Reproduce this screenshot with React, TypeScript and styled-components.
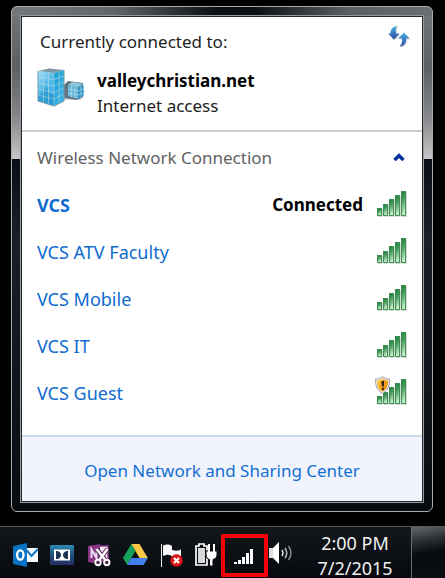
import React from "react";
import styled, { createGlobalStyle } from "styled-components";

const GlobalStyle = createGlobalStyle`
  * { box-sizing: border-box; }
  body {
    margin: 0;
    background: #000;
    font-family: "Noto Sans", "Open Sans", sans-serif;
    font-size: 17px;
    line-height: 24px;
  }
  button { font: inherit; color: inherit; border: 0; background: none; padding: 0; cursor: pointer; }
  svg { display: block; flex: none; }
`;

const Desktop = styled.div`
  min-height: 100vh;
  display: flex;
  flex-direction: column;
  justify-content: space-between;
`;

const Frame = styled.main`
  margin: 6px 12px 0 11px;
  padding: 8px;
  border: 1px solid #a9abad;
  border-radius: 6px;
  background:
    linear-gradient(90deg, #75787b 0%, #64676a 24%, #0c1115 48%, #0c1115 58%, #5c5f62 80%, #6b6e71 100%) top / 100% 9px no-repeat,
    linear-gradient(180deg, #75787b 0, #5c6063 60px, #85878a 110px, #c6c7c8 152px, #090f15 152px, #1a1f26 230px, #070c11 100%);
`;

const Panel = styled.div`
  border: 1px solid #96989b;
  outline: 1px solid #24282c;
  outline-offset: -2px;
  padding: 1px;
  background: #fff;
`;

const Current = styled.header`
  display: grid;
  grid-template-columns: 48px 1fr auto;
  column-gap: 12px;
  padding: 13px 11px 12px 15px;
  border-bottom: 2px solid #cdcdcd;
`;

const Heading = styled.h1`
  grid-column: 1 / 3;
  margin: 0 0 14px 3px;
  font-size: 17px;
  font-weight: 400;
  line-height: 24px;
  color: #222;
`;

const Details = styled.div`
  line-height: 25px;
  color: #1c1c1c;
`;

const NetworkName = styled.strong`
  display: block;
  color: #000;
`;

const RefreshButton = styled.button`
  align-self: start;
  margin-top: -4px;
`;

const Networks = styled.section`
  padding: 4px 13px 19px 15px;
`;

const GroupButton = styled.button`
  width: 100%;
  height: 45px;
  display: flex;
  align-items: center;
  justify-content: space-between;
  padding: 0 4px 2px 0;
  color: #626262;
`;

const List = styled.ul`
  margin: 0;
  padding: 0;
  list-style: none;
`;

const Row = styled.button<{ $active?: boolean }>`
  width: 100%;
  height: 47px;
  display: flex;
  align-items: center;
  gap: 14px;
  text-align: left;
  color: #0f6bd0;
  font-weight: ${(p) => (p.$active ? 700 : 400)};
`;

const Name = styled.span`
  flex: 1;
  font-size: 18px;
`;

const Status = styled.span`
  color: #000;
`;

const Footer = styled.footer`
  display: flex;
  align-items: center;
  justify-content: center;
  height: 66px;
  padding-top: 4px;
  border-top: 2px solid #cfdbea;
  background: #f1f4fc;
`;

const CenterLink = styled.a`
  color: #146fd3;
  text-decoration: none;
`;

const Taskbar = styled.nav`
  display: flex;
  height: 52px;
  padding-left: 13px;
  border-top: 1px solid #54585b;
  background: linear-gradient(180deg, #12171b, #070b0f 90%, #0d0610);
`;

const Tray = styled.div`
  display: flex;
  align-items: center;
  gap: 12px;
  padding-top: 4px;
`;

const TrayButton = styled.button``;

const NetworkButton = styled.button`
  align-self: flex-start;
  display: flex;
  align-items: flex-end;
  justify-content: center;
  width: 47px;
  height: 43px;
  margin: 7px 0 0 3px;
  padding-bottom: 8px;
  border: 4px solid #f40008;
  border-radius: 1px;
`;

const Clock = styled.time`
  flex: 1;
  height: 47px;
  margin-top: 4px;
  padding-left: 6px;
  text-align: center;
  font-size: 18px;
  line-height: 25px;
  color: #f0f0f0;
`;

const ShowDesktop = styled.button`
  width: 34px;
  border-left: 1px solid #6a6d70;
  background: linear-gradient(170deg, #65686a 0, #2d3235 26%, #080c0f 50%, #0a0e12 100%);
`;

const bars = [
  [0, 7],
  [6, 11],
  [12, 16],
  [18, 20],
  [24, 24],
];

const Signal = ({ guarded }: { guarded?: boolean }) => (
  <svg width="32" height="32" viewBox="0 0 32 32" aria-hidden="true" overflow="visible">
    <defs>
      <linearGradient id="bar" x1="0" y1="0" x2="0.3" y2="1">
        <stop offset="0" stopColor="#177b36" />
        <stop offset="0.45" stopColor="#4c9e60" />
        <stop offset="1" stopColor="#c9f0cd" />
      </linearGradient>
      <linearGradient id="shield" x1="0" y1="0" x2="1" y2="1">
        <stop offset="0" stopColor="#ffd65a" />
        <stop offset="0.5" stopColor="#f7a51c" />
        <stop offset="1" stopColor="#dc7c08" />
      </linearGradient>
    </defs>
    {bars.map(([x, h]) => (
      <g key={x}>
        <rect x={x + 1} y={27 - h} width="5" height={h + 1} fill="#d3ddd4" />
        <rect x={x + 0.5} y={26.5 - h} width="4" height={h} fill="url(#bar)" stroke="#34874b" strokeWidth="0.9" />
      </g>
    ))}
    {guarded && (
      <g>
        <path d="M5.500-.5C3.500 1.500 1 2-1.500 2.200C-1.500 8-.5 13 5.500 16.500C11.500 13 12.700 8 12.700 2.200C10 2 7.500 1.500 5.500-.5Z" fill="#e8e8e8" stroke="#8e8e8e" strokeWidth="0.8" />
        <path d="M5.500 1.200C4 2.700 2 3.400 0 3.600C0 8 1 12 5.500 14.800C10 12 11.200 8 11.200 3.600C9 3.400 7 2.700 5.500 1.200Z" fill="url(#shield)" />
        <path d="M4.200 4.500L7.200 3.500L6.800 9.500H5Z M5 10.800H6.900V13H5Z" fill="#302010" />
      </g>
    )}
  </svg>
);

const Buildings = () => (
  <svg width="50" height="40" viewBox="0 0 50 40" aria-hidden="true">
    <defs>
      <linearGradient id="glassFront" x1="0" y1="0" x2="0.5" y2="1">
        <stop offset="0" stopColor="#a5e1f7" />
        <stop offset="0.5" stopColor="#56bdea" />
        <stop offset="1" stopColor="#3babe0" />
      </linearGradient>
      <linearGradient id="glassSide" x1="0" y1="0" x2="1" y2="1">
        <stop offset="0" stopColor="#169bd0" />
        <stop offset="1" stopColor="#45b9ea" />
      </linearGradient>
    </defs>
    <path d="M17 38L29 32L44 32L48 23L46 19L30 25Z" fill="#777" opacity="0.28" />
    <path d="M27 17L31 13L46 15V29L40 32L27 30Z" fill="#62737e" />
    <path d="M31 17L41 19V31L31 28Z" fill="#6ab7dc" />
    <path d="M41 19L46.500 17V28L41 31Z" fill="#2e93c5" />
    <path d="M31 17L35 14L46.500 16L41 19Z" fill="#8cc5dc" />
    <path d="M31 21L41 23L46.500 20.500M31 25L41 27L46.500 24.500M34.500 17.500V29.500M38 18.500V30.500M44 18V29.500" fill="none" stroke="#b7e1ed" strokeWidth="0.6" />
    <path d="M1 3L17 5V38L1 33Z" fill="url(#glassFront)" />
    <path d="M17 5L27 2V33L17 38Z" fill="url(#glassSide)" />
    <path d="M1 3L12 .500L27 2L17 5Z" fill="#7d98a5" />
    <path d="M1 28L5 24L9 19L13 25L17 28V38L1 33Z" fill="#1385bd" opacity="0.45" />
    <path d="M1 9L17 11.500L27 8M1 15L17 18L27 14M1 21L17 24.500L27 20M1 27L17 31L27 26M6.500 4V35M11.500 4.500V36.500M17 5V38M22 4V35M1 3V33L17 38L27 33V2" fill="none" stroke="#b0d9e8" strokeWidth="0.6" />
    <path d="M1 3V33L17 38L27 33V2" fill="none" stroke="#537c90" strokeWidth="0.7" />
  </svg>
);

const Refresh = () => (
  <svg width="24" height="24" viewBox="0 0 24 24" aria-hidden="true">
    <defs>
      <linearGradient id="arrow" x1="0" y1="0" x2="0" y2="1">
        <stop offset="0" stopColor="#50bade" />
        <stop offset="0.45" stopColor="#3b7fc8" />
        <stop offset="1" stopColor="#234f9c" />
      </linearGradient>
    </defs>
    <g transform="translate(1 1)" fill="#bbb" opacity="0.6">
      <path d="M10.500 0C6 0 3.500 3 3.500 7.500H1L7 13.500L12.500 7.500H9C8.500 4.500 8.500 2 10.500 0Z" />
      <path d="M12.500 20.500C17 20 19.500 17 19 12.500H22.500L17 6.500L11 12.500H15C15.500 15.500 15 18 12.500 20.500Z" />
    </g>
    <path d="M10.500 0C6 0 3.500 3 3.500 7.500H1L7 13.500L12.500 7.500H9C8.500 4.500 8.500 2 10.500 0Z" fill="url(#arrow)" />
    <path d="M12.500 20.500C17 20 19.500 17 19 12.500H22.500L17 6.500L11 12.500H15C15.500 15.500 15 18 12.500 20.500Z" fill="url(#arrow)" />
  </svg>
);

const Chevron = () => (
  <svg width="12" height="10" viewBox="0 0 12 10" aria-hidden="true">
    <path d="M1.500 7L6 2.700L10.500 7" fill="none" stroke="#04309c" strokeWidth="3.400" />
  </svg>
);

const Outlook = () => (
  <svg width="25" height="24" viewBox="0 0 25 24" aria-hidden="true">
    <path d="M0 3L14 0V24L0 21Z" fill="#0872c4" />
    <ellipse cx="7.300" cy="12" rx="3.200" ry="4.600" fill="none" stroke="#fff" strokeWidth="2.300" />
    <path d="M14 5H25V19H14Z" fill="#f4faff" />
    <path d="M14 7.500L18.500 13L25 6" fill="none" stroke="#1279c8" strokeWidth="2" />
  </svg>
);

const Dolby = () => (
  <svg width="26" height="20" viewBox="0 0 26 20" aria-hidden="true">
    <defs>
      <linearGradient id="dolby" x1="0" y1="0" x2="0" y2="1">
        <stop offset="0" stopColor="#2c8bb4" />
        <stop offset="0.5" stopColor="#205079" />
        <stop offset="1" stopColor="#252d61" />
      </linearGradient>
    </defs>
    <rect width="24" height="20" rx="1" fill="url(#dolby)" />
    <rect x="4" y="4.500" width="16" height="11" fill="#fff" />
    <path d="M6 6H7.500Q11 7 11 10T7.500 14H6ZM18 6H16.500Q13 7 13 10T16.500 14H18Z" fill="#1d3553" />
  </svg>
);

const OneNote = () => (
  <svg width="23" height="24" viewBox="0 0 23 24" aria-hidden="true">
    <path d="M8 3H20V18H8Z" fill="#f5e8f5" stroke="#8a3d8c" strokeWidth="1.500" />
    <path d="M0 3L12 1V21L0 19Z" fill="#853583" />
    <path d="M3.500 15V6.500L8.500 15V6.500" fill="none" stroke="#f2d7f1" strokeWidth="2" />
    <path d="M8.500 6L18 18M19.500 6L10.500 18" stroke="#5b275b" strokeWidth="4.500" />
    <path d="M8.500 6L18 18M19.500 6L10.500 18" stroke="#fff" strokeWidth="2.500" />
    <circle cx="10" cy="19.500" r="2.700" fill="#482048" stroke="#fff" strokeWidth="1.900" />
    <circle cx="18.800" cy="19.500" r="2.700" fill="#482048" stroke="#fff" strokeWidth="1.900" />
  </svg>
);

const Drive = () => (
  <svg width="25" height="22" viewBox="0 0 25 22" aria-hidden="true">
    <path d="M8.300 0H16.500L24.800 14H16.500Z" fill="#f9c846" />
    <path d="M8.300 0L12.500 7L4.200 21L0 14Z" fill="#16a05d" />
    <path d="M8.300 14H24.800L20.700 21H4.200Z" fill="#427ff0" />
  </svg>
);

const Flag = () => (
  <svg width="23" height="24" viewBox="0 0 23 24" aria-hidden="true">
    <path d="M1.500 1V24" stroke="#eee" strokeWidth="1" />
    <path d="M3 2.500C7 1 9 1 12 3V7C16 8 18 8 21 6.500V16C16 17 13 15 11 12.500C8 11 6 12 3 13Z" fill="#f7f7f7" />
    <circle cx="16.500" cy="17.500" r="6" fill="#df1719" stroke="#a91515" strokeWidth="0.600" />
    <path d="M14 15L19 20M19 15L14 20" stroke="#fff" strokeWidth="2.100" />
  </svg>
);

const Battery = () => (
  <svg width="23" height="24" viewBox="0 0 23 24" aria-hidden="true">
    <path d="M4 1H9V3H12V22H1V3H4Z" fill="none" stroke="#fff" strokeWidth="1.700" />
    <rect x="3" y="5" width="7" height="15" fill="#d9d9d9" />
    <path d="M11 8H22V12Q22 16 18 16.500V23H14.500V16.500Q11 16 11 12Z" fill="#fff" stroke="#111" strokeWidth="1" />
    <path d="M14 1V9M19 1V9" stroke="#fff" strokeWidth="2" />
  </svg>
);

const TraySignal = () => (
  <svg width="21" height="17" viewBox="0 0 21 17" aria-hidden="true">
    <path d="M0 14H3V16H0ZM4 12H7V16H4ZM8 9H11V16H8ZM12 5H15V16H12ZM16 1H19V16H16Z" fill="#fff" />
  </svg>
);

const Speaker = () => (
  <svg width="25" height="24" viewBox="0 0 25 24" aria-hidden="true">
    <path d="M1 7H5V17H1Z" fill="#ddd" />
    <path d="M5 7L11 1V23L5 17Z" fill="#fff" />
    <path d="M14 9Q16 12 14 15" fill="none" stroke="#ddd" strokeWidth="1.500" />
    <path d="M17 7Q20.500 12 17 17" fill="none" stroke="#bbb" strokeWidth="1.500" />
    <path d="M20.500 5Q25.500 12 20.500 19" fill="none" stroke="#888" strokeWidth="1.500" />
  </svg>
);

const networks = [
  { name: "VCS", connected: true },
  { name: "VCS ATV Faculty" },
  { name: "VCS Mobile" },
  { name: "VCS IT" },
  { name: "VCS Guest", guarded: true },
];

const trayItems = [
  { label: "Outlook", Icon: Outlook },
  { label: "Dolby", Icon: Dolby },
  { label: "OneNote", Icon: OneNote },
  { label: "Google Drive", Icon: Drive },
  { label: "Action Center", Icon: Flag },
  { label: "Battery", Icon: Battery },
];

export default function App() {
  return (
    <Desktop>
      <GlobalStyle />
      <Frame>
        <Panel>
          <Current>
            <Heading>Currently connected to:</Heading>
            <RefreshButton aria-label="Refresh">
              <Refresh />
            </RefreshButton>
            <Buildings />
            <Details>
              <NetworkName>valleychristian.net</NetworkName>
              Internet access
            </Details>
          </Current>
          <Networks>
            <GroupButton aria-expanded="true">
              Wireless Network Connection
              <Chevron />
            </GroupButton>
            <List>
              {networks.map((n) => (
                <li key={n.name}>
                  <Row $active={n.connected}>
                    <Name>{n.name}</Name>
                    {n.connected && <Status>Connected</Status>}
                    <Signal guarded={n.guarded} />
                  </Row>
                </li>
              ))}
            </List>
          </Networks>
          <Footer>
            <CenterLink href="#sharing">Open Network and Sharing Center</CenterLink>
          </Footer>
        </Panel>
      </Frame>
      <Taskbar>
        <Tray>
          {trayItems.map(({ label, Icon }) => (
            <TrayButton key={label} aria-label={label}>
              <Icon />
            </TrayButton>
          ))}
        </Tray>
        <NetworkButton aria-label="Network">
          <TraySignal />
        </NetworkButton>
        <TrayButton aria-label="Volume">
          <Speaker />
        </TrayButton>
        <Clock>
          2:00 PM
          <br />
          7/2/2015
        </Clock>
        <ShowDesktop aria-label="Show desktop" />
      </Taskbar>
    </Desktop>
  );
}
